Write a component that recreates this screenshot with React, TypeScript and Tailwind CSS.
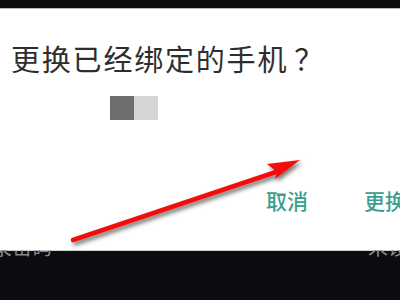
import type { FC } from "react";

const FONT = { fontFamily: '"Noto Sans CJK SC", "Noto Sans", sans-serif' };

const RedArrow: FC = () => (
  <svg className="pointer-events-none absolute inset-0 z-20" width={400} height={300} viewBox="0 0 400 300">
    <defs>
      <filter id="arrow-shadow" x="-20%" y="-20%" width="140%" height="140%">
        <feDropShadow dx="2" dy="3" stdDeviation="2" floodColor="#000" floodOpacity="0.55" />
      </filter>
    </defs>
    <g filter="url(#arrow-shadow)">
      <line x1={73} y1={240} x2={276} y2={172} stroke="#f20d0d" strokeWidth={4.5} strokeLinecap="round" />
      <polygon points="300,160 267,164 277,172 275,179" fill="#f20d0d" />
    </g>
  </svg>
);

export default function App() {
  return (
    <div className="relative flex h-[300px] w-[400px] flex-col overflow-hidden bg-[#0b0b10]" style={FONT}>
      <div className="h-2 shrink-0 bg-[#0b0b10]" />
      <div className="relative z-10 flex h-[242px] shrink-0 flex-col border-t border-[#b8b8b8] bg-white">
        <h1 className="mt-[32px] pl-[11px] text-[29px] leading-[35px] tracking-[1.8px] text-[#2e2e2e]">
          更换已经绑定的手机<span className="ml-[6px]">？</span>
        </h1>
        <div className="mt-[20px] flex pl-[110px]">
          <span className="h-6 w-6 bg-[#6e6e6e]" />
          <span className="h-6 w-6 bg-[#d6d6d6]" />
        </div>
        <div className="mt-[68px] flex justify-end gap-[56px]">
          <button className="whitespace-nowrap text-[21px] leading-6 font-medium text-[#3a9f8f]">取消</button>
          <button className="-mr-[6px] w-[42px] overflow-hidden whitespace-nowrap text-left text-[21px] leading-6 font-medium text-[#3a9f8f]">
            更换
          </button>
        </div>
      </div>
      <div className="flex flex-1 justify-between border-t border-[#d0d0d0]">
        <span className="-mt-[19px] -ml-[28px] text-[20px] text-[#8a8a8c]">登录密码</span>
        <span className="-mt-[19px] -mr-[28px] text-[20px] text-[#8a8a8c]">未设置</span>
      </div>
      <RedArrow />
    </div>
  );
}
